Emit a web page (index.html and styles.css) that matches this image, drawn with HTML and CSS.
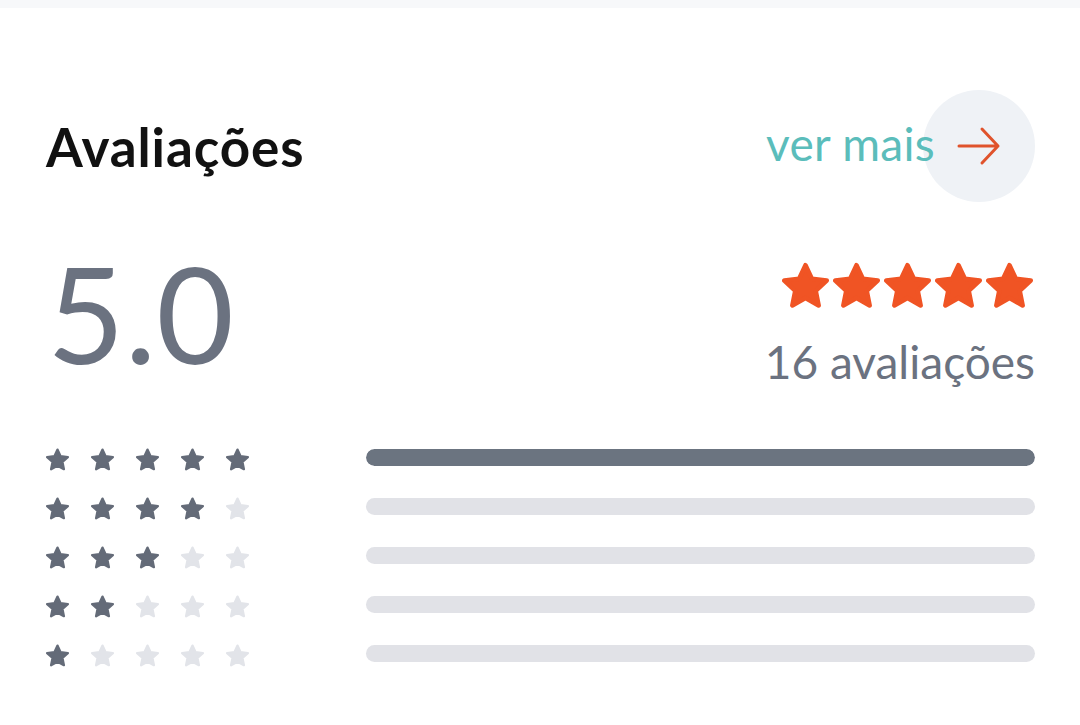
FILE: index.html
```html
<!DOCTYPE html>
<html lang="pt">
<head>
<meta charset="utf-8">
<title>Avaliações</title>
<link rel="stylesheet" href="styles.css">
</head>
<body>
<div class="topbar"></div>
<main class="reviews">
  <header class="reviews-head">
    <h2 class="title">Avaliações</h2>
    <a class="more" href="#">
      <span class="more-text">ver mais</span>
      <span class="more-btn">
        <svg width="44" height="40" viewBox="0 0 44 40" fill="none" stroke="#e0532c" stroke-width="3" stroke-linecap="round" stroke-linejoin="round"><path d="M2 20H41M25 3L41 20L25 37"/></svg>
      </span>
    </a>
  </header>

  <section class="summary">
    <div class="score">5.0</div>
    <div class="summary-right">
      <div class="big-stars">
        <svg class="bstar" viewBox="1.8 1.4 20.4 20.4"><path d="M12 2.8l2.75 5.9 6.45.75-4.78 4.4 1.28 6.38L12 17.05l-5.7 3.18 1.28-6.38L2.8 9.45l6.45-.75z"/></svg>
        <svg class="bstar" viewBox="1.8 1.4 20.4 20.4"><path d="M12 2.8l2.75 5.9 6.45.75-4.78 4.4 1.28 6.38L12 17.05l-5.7 3.18 1.28-6.38L2.8 9.45l6.45-.75z"/></svg>
        <svg class="bstar" viewBox="1.8 1.4 20.4 20.4"><path d="M12 2.8l2.75 5.9 6.45.75-4.78 4.4 1.28 6.38L12 17.05l-5.7 3.18 1.28-6.38L2.8 9.45l6.45-.75z"/></svg>
        <svg class="bstar" viewBox="1.8 1.4 20.4 20.4"><path d="M12 2.8l2.75 5.9 6.45.75-4.78 4.4 1.28 6.38L12 17.05l-5.7 3.18 1.28-6.38L2.8 9.45l6.45-.75z"/></svg>
        <svg class="bstar" viewBox="1.8 1.4 20.4 20.4"><path d="M12 2.8l2.75 5.9 6.45.75-4.78 4.4 1.28 6.38L12 17.05l-5.7 3.18 1.28-6.38L2.8 9.45l6.45-.75z"/></svg>
      </div>
      <div class="count">16 avaliações</div>
    </div>
  </section>

  <section class="dist">
    <div class="row">
      <div class="stars">
        <svg class="s on" viewBox="1.8 1.4 20.4 20.4"><path d="M12 2.8l2.75 5.9 6.45.75-4.78 4.4 1.28 6.38L12 17.05l-5.7 3.18 1.28-6.38L2.8 9.45l6.45-.75z"/></svg>
        <svg class="s on" viewBox="1.8 1.4 20.4 20.4"><path d="M12 2.8l2.75 5.9 6.45.75-4.78 4.4 1.28 6.38L12 17.05l-5.7 3.18 1.28-6.38L2.8 9.45l6.45-.75z"/></svg>
        <svg class="s on" viewBox="1.8 1.4 20.4 20.4"><path d="M12 2.8l2.75 5.9 6.45.75-4.78 4.4 1.28 6.38L12 17.05l-5.7 3.18 1.28-6.38L2.8 9.45l6.45-.75z"/></svg>
        <svg class="s on" viewBox="1.8 1.4 20.4 20.4"><path d="M12 2.8l2.75 5.9 6.45.75-4.78 4.4 1.28 6.38L12 17.05l-5.7 3.18 1.28-6.38L2.8 9.45l6.45-.75z"/></svg>
        <svg class="s on" viewBox="1.8 1.4 20.4 20.4"><path d="M12 2.8l2.75 5.9 6.45.75-4.78 4.4 1.28 6.38L12 17.05l-5.7 3.18 1.28-6.38L2.8 9.45l6.45-.75z"/></svg>
      </div>
      <div class="bar"><div class="fill" style="width:100%"></div></div>
    </div>
    <div class="row">
      <div class="stars">
        <svg class="s on" viewBox="1.8 1.4 20.4 20.4"><path d="M12 2.8l2.75 5.9 6.45.75-4.78 4.4 1.28 6.38L12 17.05l-5.7 3.18 1.28-6.38L2.8 9.45l6.45-.75z"/></svg>
        <svg class="s on" viewBox="1.8 1.4 20.4 20.4"><path d="M12 2.8l2.75 5.9 6.45.75-4.78 4.4 1.28 6.38L12 17.05l-5.7 3.18 1.28-6.38L2.8 9.45l6.45-.75z"/></svg>
        <svg class="s on" viewBox="1.8 1.4 20.4 20.4"><path d="M12 2.8l2.75 5.9 6.45.75-4.78 4.4 1.28 6.38L12 17.05l-5.7 3.18 1.28-6.38L2.8 9.45l6.45-.75z"/></svg>
        <svg class="s on" viewBox="1.8 1.4 20.4 20.4"><path d="M12 2.8l2.75 5.9 6.45.75-4.78 4.4 1.28 6.38L12 17.05l-5.7 3.18 1.28-6.38L2.8 9.45l6.45-.75z"/></svg>
        <svg class="s" viewBox="1.8 1.4 20.4 20.4"><path d="M12 2.8l2.75 5.9 6.45.75-4.78 4.4 1.28 6.38L12 17.05l-5.7 3.18 1.28-6.38L2.8 9.45l6.45-.75z"/></svg>
      </div>
      <div class="bar"><div class="fill" style="width:0%"></div></div>
    </div>
    <div class="row">
      <div class="stars">
        <svg class="s on" viewBox="1.8 1.4 20.4 20.4"><path d="M12 2.8l2.75 5.9 6.45.75-4.78 4.4 1.28 6.38L12 17.05l-5.7 3.18 1.28-6.38L2.8 9.45l6.45-.75z"/></svg>
        <svg class="s on" viewBox="1.8 1.4 20.4 20.4"><path d="M12 2.8l2.75 5.9 6.45.75-4.78 4.4 1.28 6.38L12 17.05l-5.7 3.18 1.28-6.38L2.8 9.45l6.45-.75z"/></svg>
        <svg class="s on" viewBox="1.8 1.4 20.4 20.4"><path d="M12 2.8l2.75 5.9 6.45.75-4.78 4.4 1.28 6.38L12 17.05l-5.7 3.18 1.28-6.38L2.8 9.45l6.45-.75z"/></svg>
        <svg class="s" viewBox="1.8 1.4 20.4 20.4"><path d="M12 2.8l2.75 5.9 6.45.75-4.78 4.4 1.28 6.38L12 17.05l-5.7 3.18 1.28-6.38L2.8 9.45l6.45-.75z"/></svg>
        <svg class="s" viewBox="1.8 1.4 20.4 20.4"><path d="M12 2.8l2.75 5.9 6.45.75-4.78 4.4 1.28 6.38L12 17.05l-5.7 3.18 1.28-6.38L2.8 9.45l6.45-.75z"/></svg>
      </div>
      <div class="bar"><div class="fill" style="width:0%"></div></div>
    </div>
    <div class="row">
      <div class="stars">
        <svg class="s on" viewBox="1.8 1.4 20.4 20.4"><path d="M12 2.8l2.75 5.9 6.45.75-4.78 4.4 1.28 6.38L12 17.05l-5.7 3.18 1.28-6.38L2.8 9.45l6.45-.75z"/></svg>
        <svg class="s on" viewBox="1.8 1.4 20.4 20.4"><path d="M12 2.8l2.75 5.9 6.45.75-4.78 4.4 1.28 6.38L12 17.05l-5.7 3.18 1.28-6.38L2.8 9.45l6.45-.75z"/></svg>
        <svg class="s" viewBox="1.8 1.4 20.4 20.4"><path d="M12 2.8l2.75 5.9 6.45.75-4.78 4.4 1.28 6.38L12 17.05l-5.7 3.18 1.28-6.38L2.8 9.45l6.45-.75z"/></svg>
        <svg class="s" viewBox="1.8 1.4 20.4 20.4"><path d="M12 2.8l2.75 5.9 6.45.75-4.78 4.4 1.28 6.38L12 17.05l-5.7 3.18 1.28-6.38L2.8 9.45l6.45-.75z"/></svg>
        <svg class="s" viewBox="1.8 1.4 20.4 20.4"><path d="M12 2.8l2.75 5.9 6.45.75-4.78 4.4 1.28 6.38L12 17.05l-5.7 3.18 1.28-6.38L2.8 9.45l6.45-.75z"/></svg>
      </div>
      <div class="bar"><div class="fill" style="width:0%"></div></div>
    </div>
    <div class="row">
      <div class="stars">
        <svg class="s on" viewBox="1.8 1.4 20.4 20.4"><path d="M12 2.8l2.75 5.9 6.45.75-4.78 4.4 1.28 6.38L12 17.05l-5.7 3.18 1.28-6.38L2.8 9.45l6.45-.75z"/></svg>
        <svg class="s" viewBox="1.8 1.4 20.4 20.4"><path d="M12 2.8l2.75 5.9 6.45.75-4.78 4.4 1.28 6.38L12 17.05l-5.7 3.18 1.28-6.38L2.8 9.45l6.45-.75z"/></svg>
        <svg class="s" viewBox="1.8 1.4 20.4 20.4"><path d="M12 2.8l2.75 5.9 6.45.75-4.78 4.4 1.28 6.38L12 17.05l-5.7 3.18 1.28-6.38L2.8 9.45l6.45-.75z"/></svg>
        <svg class="s" viewBox="1.8 1.4 20.4 20.4"><path d="M12 2.8l2.75 5.9 6.45.75-4.78 4.4 1.28 6.38L12 17.05l-5.7 3.18 1.28-6.38L2.8 9.45l6.45-.75z"/></svg>
        <svg class="s" viewBox="1.8 1.4 20.4 20.4"><path d="M12 2.8l2.75 5.9 6.45.75-4.78 4.4 1.28 6.38L12 17.05l-5.7 3.18 1.28-6.38L2.8 9.45l6.45-.75z"/></svg>
      </div>
      <div class="bar"><div class="fill" style="width:0%"></div></div>
    </div>
  </section>
</main>
</body>
</html>
```

FILE: styles.css
```css
* { box-sizing: border-box; }

html, body {
  margin: 0;
  padding: 0;
  background: #ffffff;
  font-family: Lato, "Noto Sans", "Liberation Sans", sans-serif;
}

.topbar {
  height: 8px;
  background: #f7f8fa;
}

.reviews {
  padding: 0 45px 0 46px;
}

.reviews-head {
  display: flex;
  align-items: center;
  justify-content: space-between;
  margin-top: 82px;
}

.title {
  margin: 0;
  font-size: 53px;
  font-weight: 700;
  line-height: 1;
  color: #111111;
  letter-spacing: 0.9px;
}

.more {
  display: flex;
  align-items: center;
  text-decoration: none;
}

.more-text {
  position: relative;
  z-index: 1;
  margin-right: -12px;
  font-size: 46px;
  line-height: 1;
  color: #5bbdbb;
  padding-bottom: 4px;
  letter-spacing: 0.3px;
}

.more-btn {
  width: 112px;
  height: 112px;
  border-radius: 50%;
  background: #eff2f6;
  display: flex;
  align-items: center;
  justify-content: center;
}

.summary {
  display: flex;
  justify-content: space-between;
  align-items: flex-start;
  margin-top: 46px;
}

.score {
  font-size: 134px;
  line-height: 1;
  font-weight: 400;
  color: #6b7280;
  margin-left: 1px;
  margin-top: -2px;
}

.summary-right {
  display: flex;
  flex-direction: column;
  align-items: flex-end;
  padding-top: 14px;
}

.big-stars {
  display: flex;
  gap: 4px;
  margin-right: 2px;
}

.bstar {
  width: 47px;
  height: 47px;
  fill: #f05424;
  stroke: #f05424;
  stroke-width: 2;
  stroke-linejoin: round;
}

.count {
  margin-top: 30px;
  font-size: 46px;
  line-height: 1;
  color: #6b7280;
}

.dist {
  margin-top: 48px;
  display: flex;
  flex-direction: column;
}

.row {
  display: grid;
  grid-template-columns: 320px 1fr;
  align-items: center;
  height: 49px;
}

.stars {
  display: flex;
  gap: 22px;
  padding-top: 3px;
}

.s {
  width: 23px;
  height: 23px;
  fill: #e2e4e9;
  stroke: #e2e4e9;
  stroke-width: 2;
  stroke-linejoin: round;
}

.s.on {
  fill: #646b78;
  stroke: #646b78;
}

.bar {
  height: 17px;
  border-radius: 9px;
  background: #e1e2e7;
  overflow: hidden;
}

.fill {
  height: 100%;
  background: #6b7480;
  border-radius: 9px;
}
```
